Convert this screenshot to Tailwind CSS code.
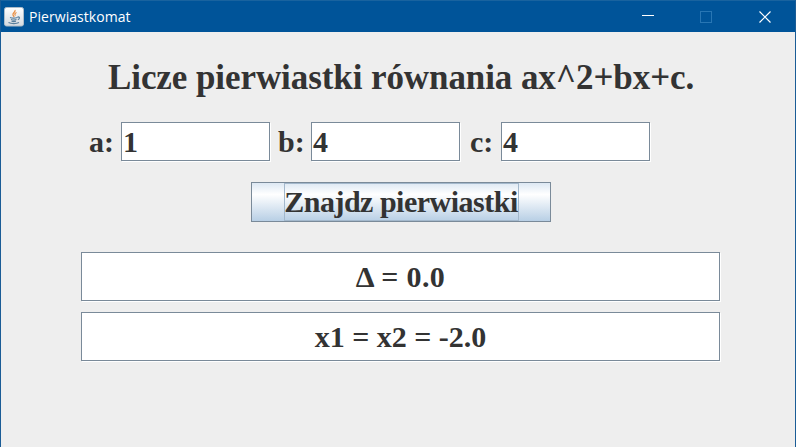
<!DOCTYPE html>
<html lang="pl">
<head>
<meta charset="utf-8">
<title>Pierwiastkomat</title>
<script src="https://cdn.jsdelivr.net/npm/@tailwindcss/browser@4"></script>
</head>
<body class="overflow-hidden bg-[#eeeeee]">
<div class="flex h-[447px] w-[796px] flex-col border-x border-[#1a5c96] bg-[#eeeeee]">
  <header class="flex h-8 shrink-0 items-center border-t border-[#19639f] bg-[#005499] pl-[3px] text-white">
    <svg class="h-5 w-5 shrink-0" viewBox="0 0 20 20" fill="none">
      <defs><linearGradient id="tile" x1="0" y1="0" x2="0" y2="1"><stop stop-color="#fff"/><stop offset="1" stop-color="#d5dadf"/></linearGradient></defs>
      <rect x=".5" y=".5" width="19" height="18.5" rx="2" fill="url(#tile)" stroke="#aebdca"/>
      <path d="M11 3c1 2-3 3-2 5 .3.8 1 1.200 1 2M12.500 5.500c-2 1-2 2-1 3" stroke="#e88b3d" stroke-width="1.200"/>
      <path d="M6 10.500c2 .8 5 .8 7.500 0M7 12.500c2 .7 4 .7 5.500 0M7.500 14.300c1.500.5 3 .5 4.500 0M13.500 10c2.500-.5 2.500 2 .3 2.700M4.500 15.500c3 1.500 8 1.300 10.500 0" stroke="#587e9c" stroke-width="1.200"/>
    </svg>
    <span class="ml-[5px] w-[600px] font-['Open_Sans',sans-serif] text-[14px] leading-5 tracking-[0.05px]">Pierwiastkomat</span>
    <svg class="ml-[13px] h-3 w-3 shrink-0" viewBox="0 0 12 12"><path d="M0 4.500h12" stroke="#fff"/></svg>
    <svg class="ml-[46px] h-3 w-3 shrink-0" viewBox="0 0 12 12"><rect x=".5" y=".5" width="11" height="11" fill="none" stroke="#2876b4"/></svg>
    <svg class="ml-[47px] h-3 w-3 shrink-0" viewBox="0 0 12 12"><path d="m.5.500 11 11m0-11-11 11" stroke="#fff" stroke-width="1.200"/></svg>
  </header>
  <main class="flex flex-col font-['Liberation_Serif',serif] text-[30px] font-bold leading-[34px] text-[#333333]">
    <h1 class="mt-[26px] h-10 pl-[107px] text-[35px] leading-10 tracking-[-0.08px] whitespace-nowrap">Licze pierwiastki równania ax^2+bx+c.</h1>
    <div class="mt-6 flex h-[39px] items-center">
      <label class="w-[120px] pl-[88px]">a:</label>
      <div class="flex h-[39px] w-[149px] items-center border border-[#7a8a99] bg-white pl-px shadow-[1px_1px_0_#fff]">1</div>
      <label class="w-[41px] pl-2">b:</label>
      <div class="flex h-[39px] w-[149px] items-center border border-[#7a8a99] bg-white pl-px shadow-[1px_1px_0_#fff]">4</div>
      <label class="w-[41px] pl-[10px]">c:</label>
      <div class="flex h-[39px] w-[149px] items-center border border-[#7a8a99] bg-white pl-px shadow-[1px_1px_0_#fff]">4</div>
    </div>
    <button class="mt-[21px] ml-[250px] flex h-10 w-[300px] items-center justify-center border border-[#7a8a99] bg-linear-to-b from-[#dde8f3] via-white via-30% to-[#b8cfe5]">
      <span class="flex h-[38px] w-[235px] items-center justify-center border border-[#a3b8cc] tracking-[-0.5px] whitespace-nowrap">Znajdz pierwiastki</span>
    </button>
    <div class="mt-[30px] ml-20 flex h-[49px] w-[639px] items-center justify-center border border-[#7a8a99] bg-white tracking-[0.4px] shadow-[1px_1px_0_#fff]">Δ = 0.0</div>
    <div class="mt-[11px] ml-20 flex h-[49px] w-[639px] items-center justify-center border border-[#7a8a99] bg-white shadow-[1px_1px_0_#fff]">x1 = x2 = -2.0</div>
  </main>
</div>
</body>
</html>
